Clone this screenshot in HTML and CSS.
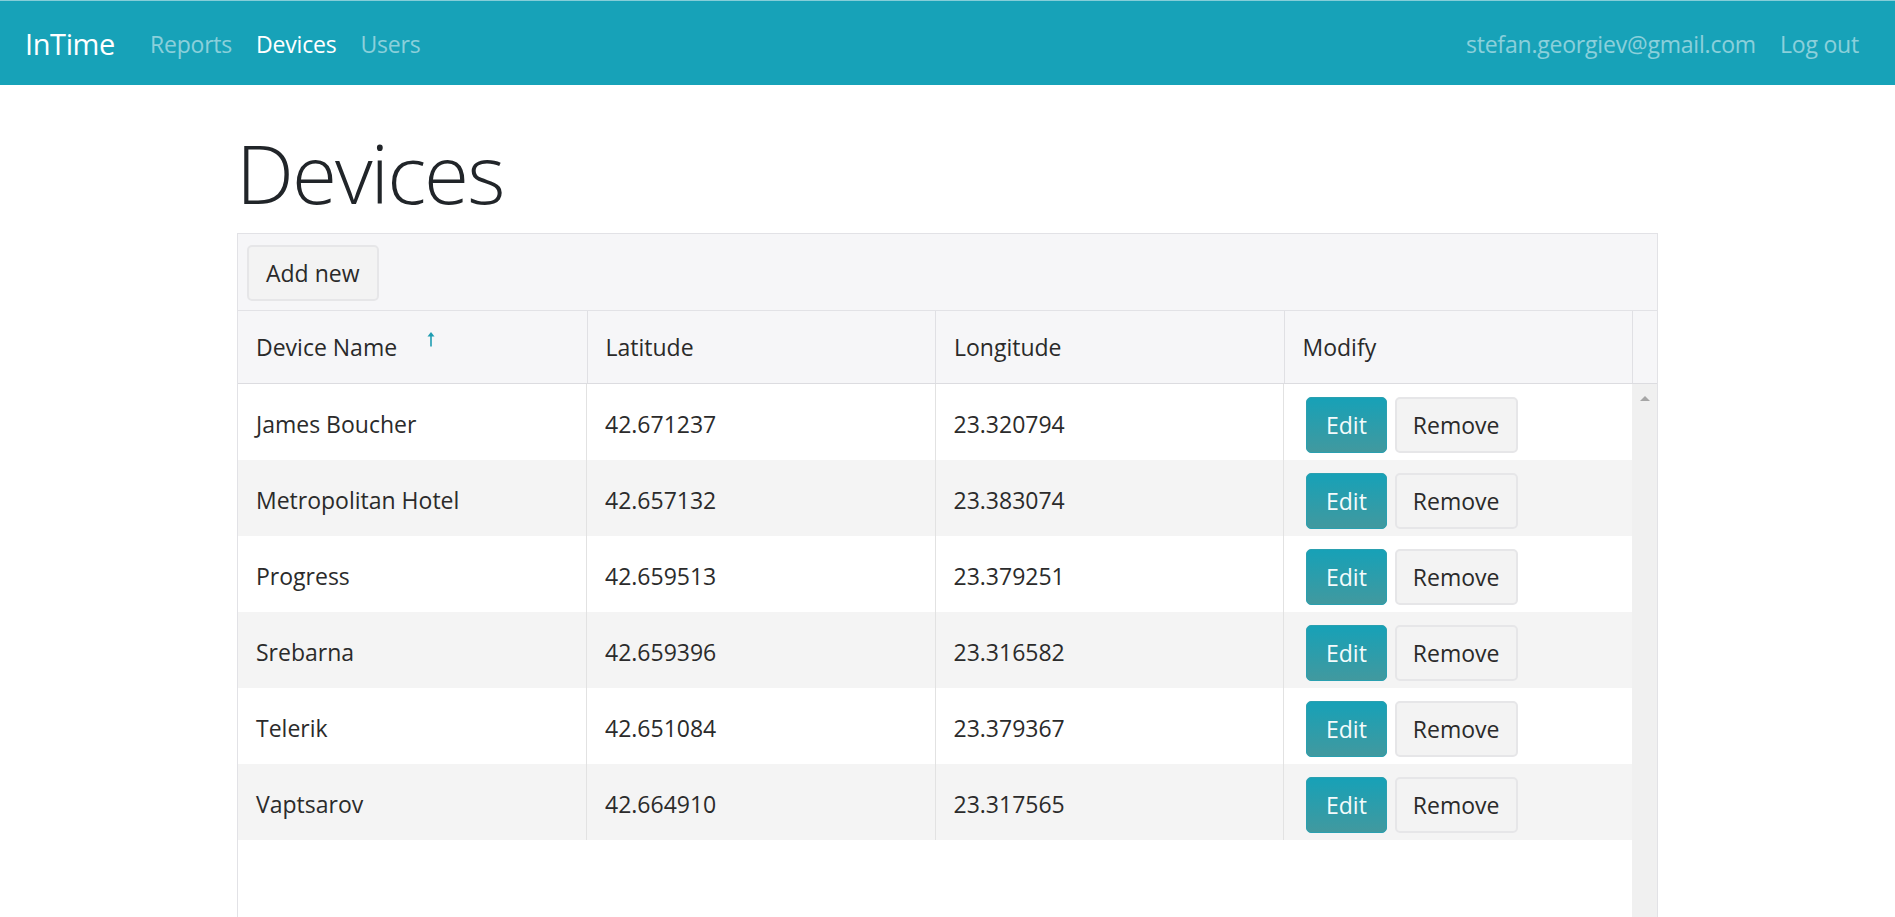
FILE: index.html
```html
<!DOCTYPE html>
<html lang="en">
<head>
<meta charset="utf-8">
<title>Devices - InTime</title>
<link rel="stylesheet" href="styles.css">
</head>
<body>
<nav class="navbar">
  <a class="brand" href="#">InTime</a>
  <ul class="nav">
    <li><a class="nav-link" href="#">Reports</a></li>
    <li><a class="nav-link active" href="#">Devices</a></li>
    <li><a class="nav-link" href="#">Users</a></li>
  </ul>
  <ul class="nav nav-right">
    <li><a class="nav-link" href="#">stefan.georgiev@gmail.com</a></li>
    <li><a class="nav-link" href="#">Log out</a></li>
  </ul>
</nav>
<main class="container">
  <h1 class="page-title">Devices</h1>
  <div class="grid">
    <div class="toolbar"><button class="btn btn-default btn-add">Add new</button></div>
    <div class="grid-header">
      <div class="th">Device Name<svg class="sort-icon" width="8" height="16" viewBox="0 0 8 16"><path d="M4 15.5V3" stroke="#1f9db1" stroke-width="1.6" fill="none"/><path d="M0.5 5.5L4 1L7.5 5.5Z" fill="#1f9db1"/></svg></div>
      <div class="th">Latitude</div>
      <div class="th">Longitude</div>
      <div class="th">Modify</div>
      <div class="th th-spacer"></div>
    </div>
    <div class="grid-body">
      <div class="content">
        <table class="rows">
          <tbody>
            <tr><td>James Boucher</td><td>42.671237</td><td>23.320794</td><td class="actions"><button class="btn btn-edit">Edit</button><button class="btn btn-default">Remove</button></td></tr>
            <tr class="alt"><td>Metropolitan Hotel</td><td>42.657132</td><td>23.383074</td><td class="actions"><button class="btn btn-edit">Edit</button><button class="btn btn-default">Remove</button></td></tr>
            <tr><td>Progress</td><td>42.659513</td><td>23.379251</td><td class="actions"><button class="btn btn-edit">Edit</button><button class="btn btn-default">Remove</button></td></tr>
            <tr class="alt"><td>Srebarna</td><td>42.659396</td><td>23.316582</td><td class="actions"><button class="btn btn-edit">Edit</button><button class="btn btn-default">Remove</button></td></tr>
            <tr><td>Telerik</td><td>42.651084</td><td>23.379367</td><td class="actions"><button class="btn btn-edit">Edit</button><button class="btn btn-default">Remove</button></td></tr>
            <tr class="alt"><td>Vaptsarov</td><td>42.664910</td><td>23.317565</td><td class="actions"><button class="btn btn-edit">Edit</button><button class="btn btn-default">Remove</button></td></tr>
          </tbody>
        </table>
      </div>
      <div class="scrollbar"><span class="scroll-arrow"></span></div>
    </div>
  </div>
</main>
</body>
</html>
```
FILE: styles.css
```css
html, body {
  margin: 0;
  padding: 0;
  overflow: hidden;
}
body {
  font-family: "Open Sans", "Noto Sans", sans-serif;
  font-size: 23px;
  line-height: 36px;
  color: #212529;
  background: #fff;
}
.navbar {
  display: flex;
  align-items: center;
  height: 85px;
  box-sizing: border-box;
  padding: 2px 24px 0 25px;
  background: #17a2b8;
  border-top: 1px solid #86cdd8;
}
.brand {
  font-size: 29px;
  color: #fff;
  text-decoration: none;
  margin-right: 23px;
  letter-spacing: -0.4px;
}
.nav {
  display: flex;
  list-style: none;
  margin: 0;
  padding: 0;
}
.nav-right {
  margin-left: auto;
}
.nav-link {
  display: block;
  padding: 0 12px;
  color: rgba(255, 255, 255, 0.5);
  text-decoration: none;
  font-size: 23px;
  letter-spacing: -0.2px;
}
.nav-link.active {
  color: #fff;
}
.container {
  width: 1421px;
  margin: 0 auto;
}
.page-title {
  font-size: 82px;
  font-weight: 300;
  line-height: 100px;
  letter-spacing: -2px;
  margin: 37px 0 11px -1px;
  color: #212529;
}
.grid {
  border: 1px solid #e2e2e6;
  border-bottom: none;
  height: 700px;
  box-sizing: border-box;
}
.toolbar {
  height: 77px;
  box-sizing: border-box;
  padding: 11px 9px 0;
  background: #f6f6f8;
  border-bottom: 1px solid #e2e2e6;
}
.btn {
  font-family: inherit;
  font-size: 23px;
  height: 56px;
  border-radius: 5px;
  cursor: pointer;
  box-sizing: border-box;
  line-height: 1;
  vertical-align: top;
}
.btn-default {
  background: #f3f3f3;
  border: 2px solid #e6e6e8;
  color: #2a2a2a;
  padding: 0 16px;
}
.btn-add {
  padding: 0 17px;
}
.btn-edit {
  background: linear-gradient(#17a1b7, #41999f);
  border: 1px solid #2aa0b0;
  color: #f4fbfc;
  padding: 0 19px;
  margin-right: 8px;
}
.grid-header {
  display: grid;
  grid-template-columns: repeat(4, 1fr) 25px;
  background: #f6f6f8;
  border-bottom: 1px solid #dcdce0;
  height: 73px;
  box-sizing: border-box;
}
.th {
  padding: 18px 18px 0;
  color: #2a2a2a;
  white-space: nowrap;
}
.th + .th {
  border-left: 1px solid #e0e0e4;
}
.sort-icon {
  margin-left: 30px;
  vertical-align: 9px;
}
.grid-body {
  display: flex;
  align-items: flex-start;
  height: 600px;
}
.content {
  flex: 1;
  min-width: 0;
}
.rows {
  width: 100%;
  border-collapse: collapse;
  table-layout: fixed;
}
.rows td {
  height: 76px;
  box-sizing: border-box;
  padding: 3px 18px 0;
  color: #2b2b2b;
  vertical-align: middle;
  white-space: nowrap;
}
.rows td + td {
  border-left: 1px solid #e2e2e2;
}
.rows tr.alt {
  background: #f4f4f4;
}
.rows td.actions {
  padding: 13px 0 0 22px;
  vertical-align: top;
}
.scrollbar {
  width: 25px;
  height: 600px;
  background: #f0f0f0;
  display: flex;
  justify-content: center;
  padding-top: 12px;
  box-sizing: border-box;
}
.scroll-arrow {
  width: 0;
  height: 0;
  border-left: 5px solid transparent;
  border-right: 5px solid transparent;
  border-bottom: 5px solid #a6a6a6;
}
```
